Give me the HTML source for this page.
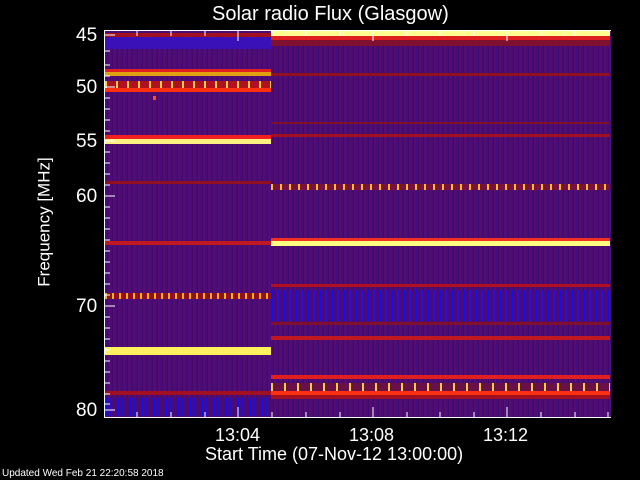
<!DOCTYPE html><html><head><style>
body{margin:0;width:640px;height:480px;background:#000;position:relative;overflow:hidden;font-family:"Liberation Sans",sans-serif;color:#fff}
.a{position:absolute}
.t{position:absolute;font-size:19px;font-weight:300}
</style></head><body>
<div class="t" style="left:212px;top:3px;font-size:20px">Solar radio Flux (Glasgow)</div>
<div class="a" style="left:104px;top:30px;width:507px;height:388px;border:1px solid #fff;border-right:none;box-sizing:border-box;background:#4a0c72"></div>
<div class="a" style="left:105px;top:31px;width:166px;height:386px;background:repeating-linear-gradient(90deg,#4a0c78 0 2px,#430a6c 2px 3px,#520e70 3px 5px)"></div>
<div class="a" style="left:105px;top:33px;width:166px;height:4px;background:#a01020"></div>
<div class="a" style="left:105px;top:37px;width:166px;height:12px;background:#3a10b8"></div>
<div class="a" style="left:105px;top:69px;width:166px;height:3px;background:#e02020"></div>
<div class="a" style="left:105px;top:72px;width:166px;height:4px;background:#e0a010"></div>
<div class="a" style="left:105px;top:81px;width:166px;height:10px;background:repeating-linear-gradient(90deg,#f0d040 0 2px,#b01020 2px 11px)"></div>
<div class="a" style="left:105px;top:88px;width:166px;height:4px;background:#ff3010"></div>
<div class="a" style="left:153px;top:96px;width:3px;height:4px;background:#ff5010"></div>
<div class="a" style="left:105px;top:135px;width:166px;height:4px;background:#f02020"></div>
<div class="a" style="left:105px;top:139px;width:166px;height:5px;background:#fff080"></div>
<div class="a" style="left:105px;top:181px;width:166px;height:3px;background:#901020"></div>
<div class="a" style="left:105px;top:241px;width:166px;height:4px;background:#c01820"></div>
<div class="a" style="left:105px;top:293px;width:166px;height:6px;background:repeating-linear-gradient(90deg,#f0b020 0 2px,#901020 2px 7px)"></div>
<div class="a" style="left:105px;top:347px;width:166px;height:8px;background:#fff060"></div>
<div class="a" style="left:105px;top:391px;width:166px;height:4px;background:#a01020"></div>
<div class="a" style="left:105px;top:398px;width:166px;height:18px;background:repeating-linear-gradient(90deg,#1010f0 0 2px,#4a0c74 2px 5px,#2010d0 5px 7px,#4a0c74 7px 12px)"></div>
<div class="a" style="left:271px;top:31px;width:339px;height:386px;background:repeating-linear-gradient(90deg,#4a0c78 0 2px,#3f0a70 2px 3px,#540e6c 3px 5px)"></div>
<div class="a" style="left:271px;top:31px;width:339px;height:5px;background:#ffff90"></div>
<div class="a" style="left:271px;top:36px;width:339px;height:4px;background:#e02020"></div>
<div class="a" style="left:271px;top:40px;width:339px;height:6px;background:#801030"></div>
<div class="a" style="left:271px;top:73px;width:339px;height:3px;background:#901020"></div>
<div class="a" style="left:271px;top:122px;width:339px;height:2px;background:#801028"></div>
<div class="a" style="left:271px;top:134px;width:339px;height:3px;background:#a01020"></div>
<div class="a" style="left:271px;top:184px;width:339px;height:6px;background:repeating-linear-gradient(90deg,#f0c030 0 2px,#7a1040 2px 9px)"></div>
<div class="a" style="left:271px;top:238px;width:339px;height:3px;background:#f03020"></div>
<div class="a" style="left:271px;top:241px;width:339px;height:5px;background:#ffff80"></div>
<div class="a" style="left:271px;top:284px;width:339px;height:3px;background:#b01020"></div>
<div class="a" style="left:271px;top:290px;width:339px;height:31px;background:repeating-linear-gradient(90deg,#1010f0 0 3px,#4a0c74 3px 6px,#2a10e0 6px 8px,#4a0c74 8px 12px)"></div>
<div class="a" style="left:271px;top:322px;width:339px;height:3px;background:#801030"></div>
<div class="a" style="left:271px;top:336px;width:339px;height:4px;background:#c01820"></div>
<div class="a" style="left:271px;top:375px;width:339px;height:4px;background:#e02020"></div>
<div class="a" style="left:271px;top:383px;width:339px;height:8px;background:repeating-linear-gradient(90deg,#f0d040 0 2px,#6a1048 2px 13px)"></div>
<div class="a" style="left:271px;top:391px;width:339px;height:4px;background:#ff3010"></div>
<div class="a" style="left:271px;top:395px;width:339px;height:4px;background:#a01020"></div>
<svg class="a" style="left:0;top:0" width="640" height="480"><g stroke="#fff" stroke-width="1">
<line x1="104.5" y1="30" x2="104.5" y2="418"/><line x1="104" y1="417.5" x2="611" y2="417.5"/><line x1="104" y1="30.5" x2="611" y2="30.5"/>
<path d="M105 35h10M105 87h10M105 141h10M105 196h10M105 306h10M105 410h10M105 51h5M105 65h5M105 76h5M105 98h5M105 109h5M105 120h5M105 131h5M105 152h5M105 163h5M105 174h5M105 185h5M105 207h5M105 218h5M105 229h5M105 240h5M105 251h5M105 262h5M105 273h5M105 284h5M105 295h5M105 317h5M105 328h5M105 339h5M105 350h5M105 361h5M105 372h5M105 383h5M105 394h5M105 404h5"/>
<path d="M238 417v-10M373 417v-10M507 417v-10M137 417v-5M171 417v-5M205 417v-5M272 417v-5M306 417v-5M340 417v-5M407 417v-5M440 417v-5M474 417v-5M541 417v-5M575 417v-5M608 417v-5"/>
<path d="M238 31v10M373 31v10M507 31v10M137 31v5M171 31v5M205 31v5M272 31v5M306 31v5M340 31v5M407 31v5M440 31v5M474 31v5M541 31v5M575 31v5"/>
</g></svg>
<div class="t" style="left:76px;top:25px">45</div>
<div class="t" style="left:76px;top:77px">50</div>
<div class="t" style="left:76px;top:131px">55</div>
<div class="t" style="left:76px;top:186px">60</div>
<div class="t" style="left:76px;top:296px">70</div>
<div class="t" style="left:76px;top:400px">80</div>
<div class="t" style="left:-20px;top:212px;transform:rotate(-90deg);font-size:17px">Frequency [MHz]</div>
<div class="t" style="left:215px;top:425px;font-size:18px">13:04</div>
<div class="t" style="left:349px;top:425px;font-size:18px">13:08</div>
<div class="t" style="left:483px;top:425px;font-size:18px">13:12</div>
<div class="t" style="left:205px;top:444px;font-size:18px">Start Time (07-Nov-12 13:00:00)</div>
<div class="t" style="left:2px;top:468px;font-size:10px">Updated Wed Feb 21 22:20:58 2018</div>
</body></html>
